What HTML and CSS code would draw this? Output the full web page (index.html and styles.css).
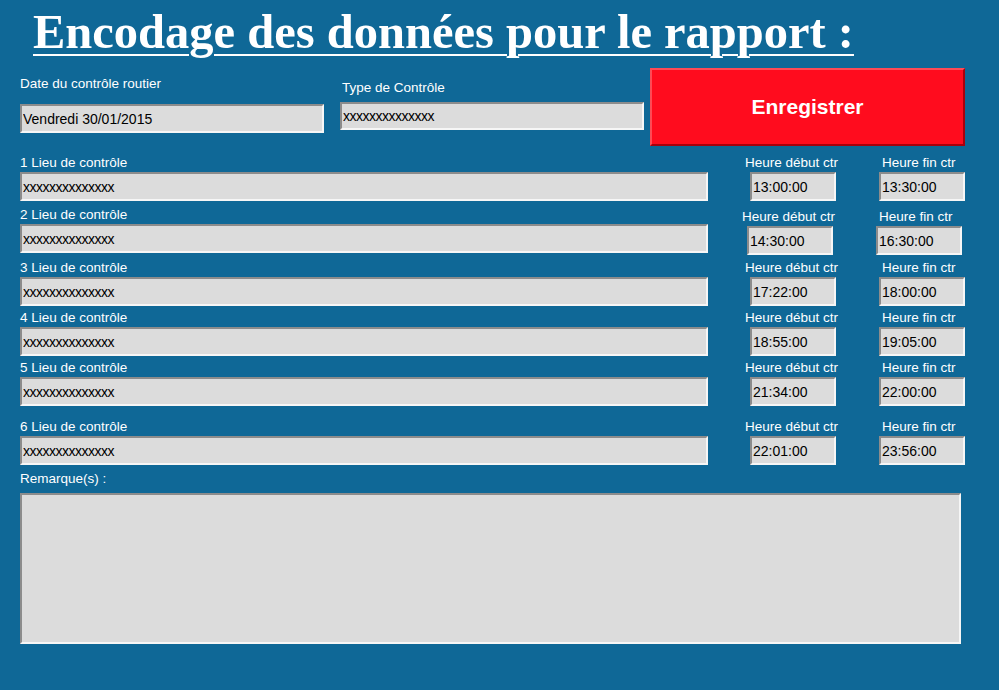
FILE: index.html
```html
<!DOCTYPE html>
<html lang="fr">
<head>
  <meta charset="UTF-8">
  <title>Encodage des données pour le rapport</title>
  <link rel="stylesheet" href="styles.css">
</head>
<body>
  <div class="page">
    <h1 class="title">Encodage des données pour le rapport :</h1>

    <div class="top">
      <div class="field date">
        <label class="label">Date du contrôle routier</label>
        <input type="text" class="input wide" value="Vendredi 30/01/2015">
      </div>
      <div class="field type">
        <label class="label">Type de Contrôle</label>
        <input type="text" class="input wide short mask" value="xxxxxxxxxxxxxx">
      </div>
      <button class="save">Enregistrer</button>
    </div>

    <!-- Lieux de contrôle -->
    <div class="row first">
      <div class="field">
        <label class="label">1 Lieu de contrôle</label>
        <input type="text" class="input place mask" value="xxxxxxxxxxxxxx">
      </div>
      <div class="times">
        <div class="field time start">
          <label class="label">Heure début ctr</label>
          <input type="text" class="input hour" value="13:00:00">
        </div>
        <div class="field time end">
          <label class="label">Heure fin ctr</label>
          <input type="text" class="input hour" value="13:30:00">
        </div>
      </div>
    </div>

    <div class="row">
      <div class="field">
        <label class="label">2 Lieu de contrôle</label>
        <input type="text" class="input place mask" value="xxxxxxxxxxxxxx">
      </div>
      <div class="times shifted">
        <div class="field time start">
          <label class="label">Heure début ctr</label>
          <input type="text" class="input hour" value="14:30:00">
        </div>
        <div class="field time end">
          <label class="label">Heure fin ctr</label>
          <input type="text" class="input hour" value="16:30:00">
        </div>
      </div>
    </div>

    <div class="row wider">
      <div class="field">
        <label class="label">3 Lieu de contrôle</label>
        <input type="text" class="input place mask" value="xxxxxxxxxxxxxx">
      </div>
      <div class="times">
        <div class="field time start">
          <label class="label">Heure début ctr</label>
          <input type="text" class="input hour" value="17:22:00">
        </div>
        <div class="field time end">
          <label class="label">Heure fin ctr</label>
          <input type="text" class="input hour" value="18:00:00">
        </div>
      </div>
    </div>

    <div class="row tight">
      <div class="field">
        <label class="label">4 Lieu de contrôle</label>
        <input type="text" class="input place mask" value="xxxxxxxxxxxxxx">
      </div>
      <div class="times">
        <div class="field time start">
          <label class="label">Heure début ctr</label>
          <input type="text" class="input hour" value="18:55:00">
        </div>
        <div class="field time end">
          <label class="label">Heure fin ctr</label>
          <input type="text" class="input hour" value="19:05:00">
        </div>
      </div>
    </div>

    <div class="row tight">
      <div class="field">
        <label class="label">5 Lieu de contrôle</label>
        <input type="text" class="input place mask" value="xxxxxxxxxxxxxx">
      </div>
      <div class="times">
        <div class="field time start">
          <label class="label">Heure début ctr</label>
          <input type="text" class="input hour" value="21:34:00">
        </div>
        <div class="field time end">
          <label class="label">Heure fin ctr</label>
          <input type="text" class="input hour" value="22:00:00">
        </div>
      </div>
    </div>

    <div class="row loose">
      <div class="field">
        <label class="label">6 Lieu de contrôle</label>
        <input type="text" class="input place mask" value="xxxxxxxxxxxxxx">
      </div>
      <div class="times">
        <div class="field time start">
          <label class="label">Heure début ctr</label>
          <input type="text" class="input hour" value="22:01:00">
        </div>
        <div class="field time end">
          <label class="label">Heure fin ctr</label>
          <input type="text" class="input hour" value="23:56:00">
        </div>
      </div>
    </div>

    <!-- Remarques -->
    <div class="field remarks">
      <label class="label">Remarque(s) :</label>
      <textarea class="input notes"></textarea>
    </div>
  </div>
</body>
</html>
```

FILE: styles.css
```css
body {
  margin: 0;
  background-color: #0f6897;
  font-family: "Liberation Sans", Arial, sans-serif;
  color: #ffffff;
  min-height: 100vh;
}

.page {
  padding: 0 20px;
}

.title {
  margin: 0 0 0 13px;
  font-family: "Liberation Serif", "Times New Roman", serif;
  font-size: 48.5px;
  font-weight: bold;
  line-height: 64px;
  text-decoration: underline;
  text-decoration-thickness: 2px;
  text-underline-offset: 6px;
}

.field {
  display: flex;
  flex-direction: column;
}

.label {
  font-size: 13.5px;
  line-height: 16px;
  white-space: nowrap;
  margin-bottom: 1px;
}

.input {
  box-sizing: border-box;
  height: 29px;
  margin: 0;
  padding: 0 1px;
  font-family: "Liberation Sans", Arial, sans-serif;
  font-size: 14px;
  color: #000000;
  background-color: #dcdcdc;
  border: 2px solid;
  border-color: #8c8c8c #f6f6f6 #f6f6f6 #8c8c8c;
  outline: none;
}

.input.mask {
  letter-spacing: -0.5px;
}

/* Top block */
.top {
  display: flex;
  align-items: flex-start;
  margin-top: 4px;
  height: 78px;
}

.date {
  margin-top: 8px;
}

.date .label {
  margin-bottom: 12px;
}

.type {
  margin: 12px 0 0 16px;
}

.type .label {
  margin: 0 0 6px 2px;
}

.input.wide {
  width: 304px;
}

.input.short {
  height: 28px;
}

.save {
  width: 315px;
  height: 78px;
  margin-left: 6px;
  background-color: #ff0c1e;
  border: 2px solid;
  border-color: #ff4a55 #a8000c #a8000c #ff4a55;
  color: #ffffff;
  font-family: "Liberation Sans", Arial, sans-serif;
  font-size: 21px;
  font-weight: bold;
  cursor: pointer;
}

/* Rows */
.row {
  display: flex;
  align-items: flex-start;
  margin-top: 6px;
}

.row.first {
  margin-top: 9px;
}

.row.wider {
  margin-top: 7px;
}

.row.tight {
  margin-top: 4px;
}

.row.loose {
  margin-top: 13px;
}

.input.place {
  width: 688px;
}

.times {
  display: flex;
  gap: 43px;
  margin-left: 42px;
}

.times.shifted {
  margin: 2px 0 -2px 39px;
}

.time {
  width: 86px;
}

.time.start .label {
  margin-left: -5px;
}

.time.end .label {
  margin-left: 3px;
}

.input.hour {
  width: 86px;
}

/* Remarques */
.remarks {
  margin-top: 6px;
}

.remarks .label {
  margin-bottom: 6px;
}

.input.notes {
  width: 941px;
  height: 151px;
  resize: none;
}
```
